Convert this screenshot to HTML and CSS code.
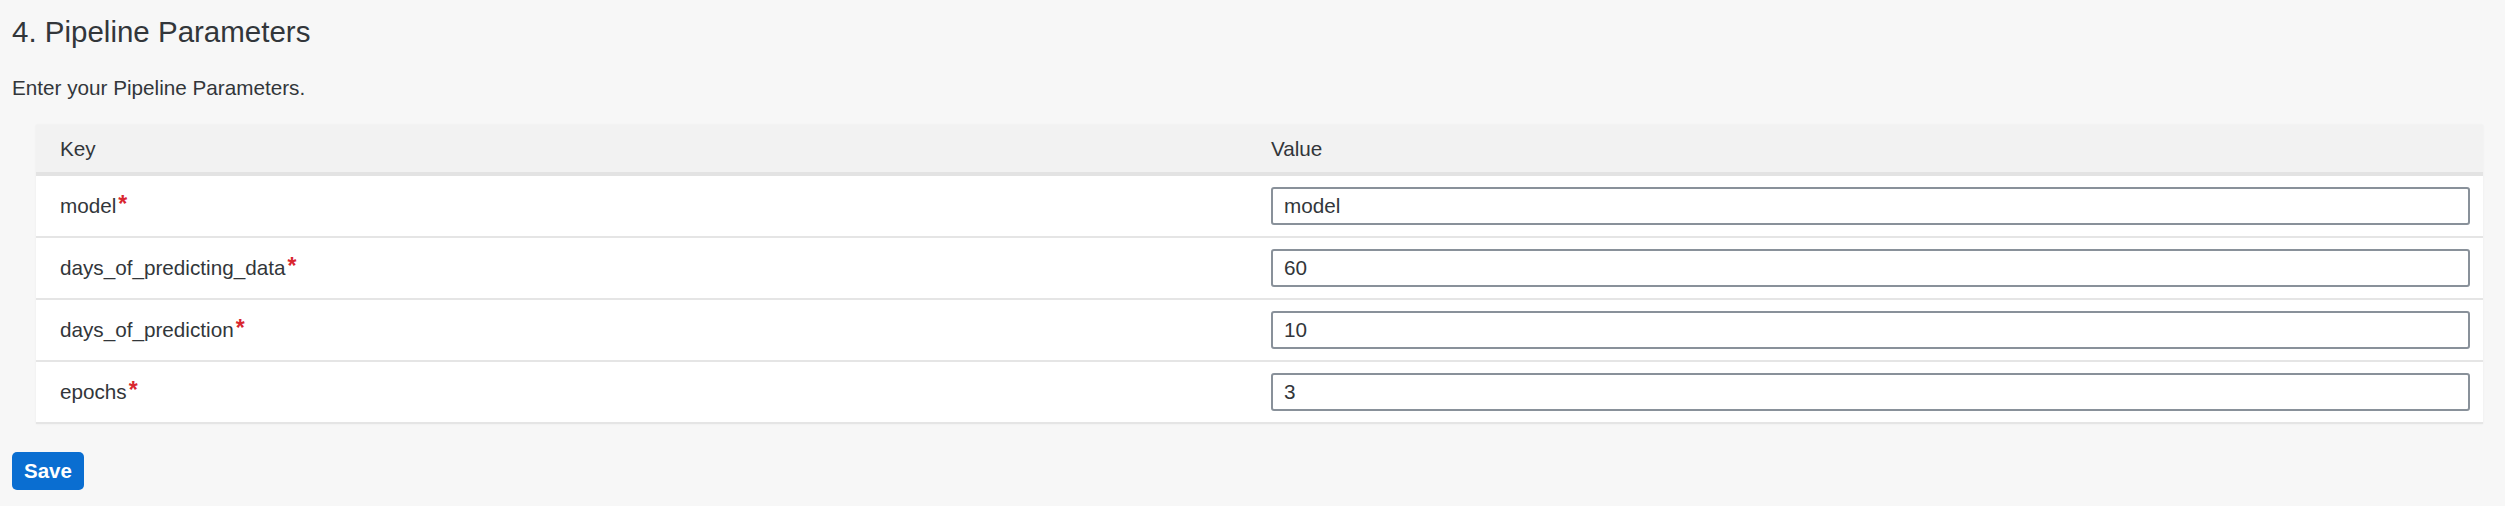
FILE: index.html
```html
<!DOCTYPE html>
<html lang="en">
<head>
<meta charset="utf-8">
<title>Pipeline Parameters</title>
<link rel="stylesheet" href="styles.css">
</head>
<body>
<main class="page">
  <h2 class="title">4. Pipeline Parameters</h2>
  <p class="desc">Enter your Pipeline Parameters.</p>
  <div class="table">
    <div class="row head">
      <div class="cell key">Key</div>
      <div class="cell val">Value</div>
    </div>
    <div class="row">
      <div class="cell key">model<span class="req">*</span></div>
      <div class="cell val"><input class="inp" type="text" value="model"></div>
    </div>
    <div class="row">
      <div class="cell key">days_of_predicting_data<span class="req">*</span></div>
      <div class="cell val"><input class="inp" type="text" value="60"></div>
    </div>
    <div class="row">
      <div class="cell key">days_of_prediction<span class="req">*</span></div>
      <div class="cell val"><input class="inp" type="text" value="10"></div>
    </div>
    <div class="row">
      <div class="cell key">epochs<span class="req">*</span></div>
      <div class="cell val"><input class="inp" type="text" value="3"></div>
    </div>
  </div>
  <button class="save" type="button">Save</button>
</main>
</body>
</html>
```
FILE: styles.css
```css
html, body {
  margin: 0;
  padding: 0;
  background: #f7f7f7;
}
body {
  font-family: "Liberation Sans", Arial, sans-serif;
  color: #32363a;
}
.page {
  display: flex;
  flex-direction: column;
  align-items: flex-start;
  padding: 14px 22px 0 12px;
}
.title {
  margin: 0;
  font-size: 29.5px;
  line-height: 36px;
  font-weight: normal;
}
.desc {
  margin: 26px 0 0;
  font-size: 20.7px;
  line-height: 24px;
}
.table {
  align-self: stretch;
  margin: 25px 0 0 24px;
  background: #fff;
  box-shadow: 0 0 2px rgba(0,0,0,0.06);
}
.row {
  display: grid;
  grid-template-columns: 1211fr 1236fr;
  height: 60px;
  border-bottom: 2px solid #e5e5e5;
}
.row.head {
  height: 47px;
  background: #f2f2f2;
  border-bottom: 4px solid #e3e3e3;
}
.cell {
  display: flex;
  align-items: center;
  font-size: 20.7px;
  line-height: 24px;
  white-space: nowrap;
}
.cell.key {
  padding-left: 24px;
}
.cell.val {
  padding-left: 24px;
  padding-right: 13px;
}
.req {
  color: #d9262f;
  font-weight: bold;
  margin-left: 2px;
  align-self: flex-start;
  margin-top: 16px;
  font-size: 23px;
  line-height: 24px;
}
.inp {
  box-sizing: border-box;
  width: 100%;
  height: 38px;
  border: 2px solid #89919a;
  border-radius: 3px;
  background: #fff;
  padding: 0 11px;
  font-family: "Liberation Sans", Arial, sans-serif;
  font-size: 20.7px;
  color: #32363a;
  outline: none;
}
.save {
  margin-top: 28px;
  width: 72px;
  height: 38px;
  border: none;
  border-radius: 5px;
  background: #0a6ed1;
  color: #fff;
  font-family: "Liberation Sans", Arial, sans-serif;
  font-size: 20.5px;
  font-weight: bold;
  padding: 0;
}
```
